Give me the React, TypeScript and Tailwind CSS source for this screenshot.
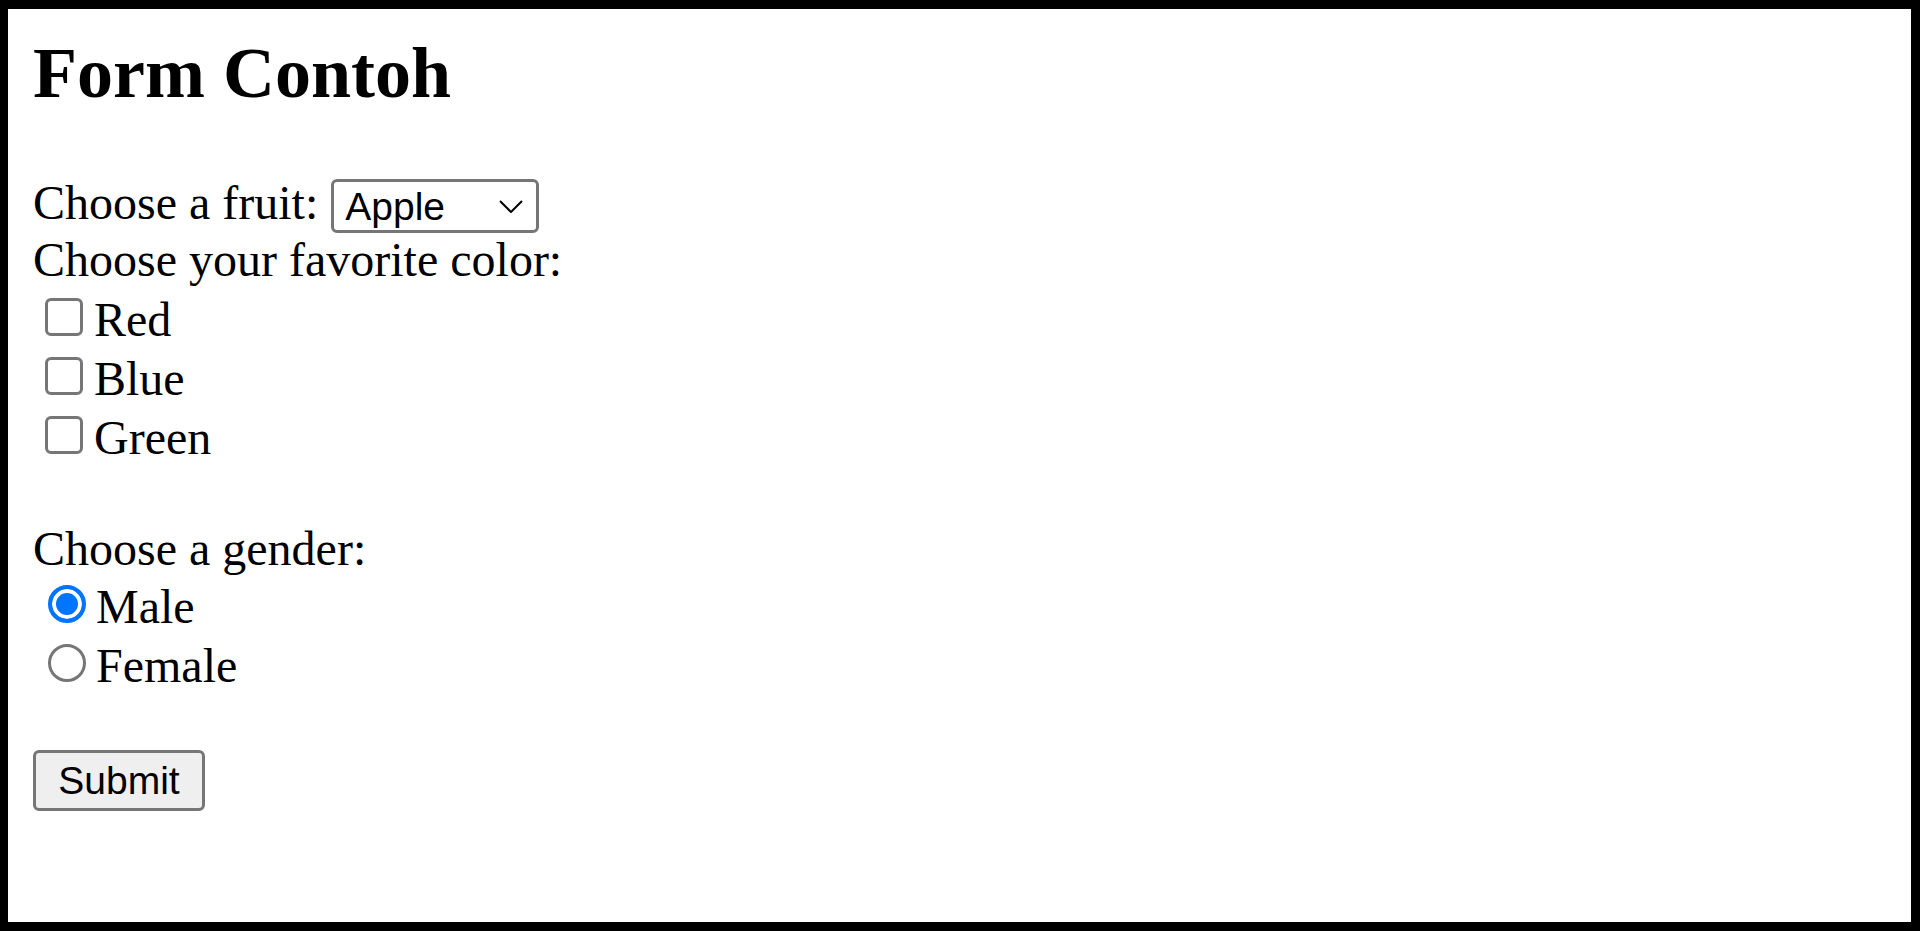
import React from 'react';

const colors = ['Red', 'Blue', 'Green'];

export default function App() {
    return (
        <div className="h-screen bg-white border-t-[9px] border-r-[9px] border-b-[9px] border-l-8 border-black pt-6 pl-[25px] text-black font-['Liberation_Serif',serif]">
            <h2 className="text-[72px] leading-[80px] h-[80px] font-bold">Form Contoh</h2>

            <form className="text-[48px]" onSubmit={(e) => e.preventDefault()}>
                <div className="mt-[66px] flex items-start h-[54px]">
                    <label className="leading-[47px]">Choose a fruit:</label>
                    <div className="ml-[13px] w-[208px] h-[54px] border-[3px] border-[#767676] rounded-[6px] bg-white flex items-center justify-between pl-[11px] pr-[13px] font-['Liberation_Sans',sans-serif] text-[39px]">
                        <span className="leading-none">Apple</span>
                        <svg width="24" height="13" viewBox="0 0 24 13" fill="none">
                            <path d="M1 1 L12 12 L23 1" stroke="#000" strokeWidth="2" />
                        </svg>
                    </div>
                </div>

                <div className="leading-[54px] h-[54px]">Choose your favorite color:</div>

                {colors.map((c) => (
                    <div key={c} className="flex items-start h-[59px]">
                        <input
                            type="checkbox"
                            className="appearance-none mt-[11px] ml-3 w-[38px] h-[38px] border-[3px] border-[#767676] rounded-[6px] bg-white"
                        />
                        <label className="ml-[11px] leading-[66px]">{c}</label>
                    </div>
                ))}

                <div className="mt-[57px] leading-[55px] h-[55px]">Choose a gender:</div>

                <div className="flex items-start h-[59px]">
                    <input
                        type="radio"
                        name="gender"
                        defaultChecked
                        className="appearance-none mt-[9px] ml-[15px] w-[38px] h-[38px] rounded-full border-[3px] border-[#767676] bg-white checked:border-4 checked:border-[#0075ff] checked:bg-[#0075ff] checked:shadow-[inset_0_0_0_4px_#fff]"
                    />
                    <label className="ml-[10px] leading-[61px]">Male</label>
                </div>
                <div className="flex items-start h-[59px]">
                    <input
                        type="radio"
                        name="gender"
                        className="appearance-none mt-[9px] ml-[15px] w-[38px] h-[38px] rounded-full border-[3px] border-[#767676] bg-white checked:border-4 checked:border-[#0075ff] checked:bg-[#0075ff] checked:shadow-[inset_0_0_0_4px_#fff]"
                    />
                    <label className="ml-[10px] leading-[61px]">Female</label>
                </div>

                <button
                    type="submit"
                    className="block mt-[56px] w-[172px] h-[61px] border-[3px] border-[#767676] rounded-[6px] bg-[#efefef] font-['Liberation_Sans',sans-serif] text-[39px] leading-none text-black"
                >
                    Submit
                </button>
            </form>
        </div>
    );
}
